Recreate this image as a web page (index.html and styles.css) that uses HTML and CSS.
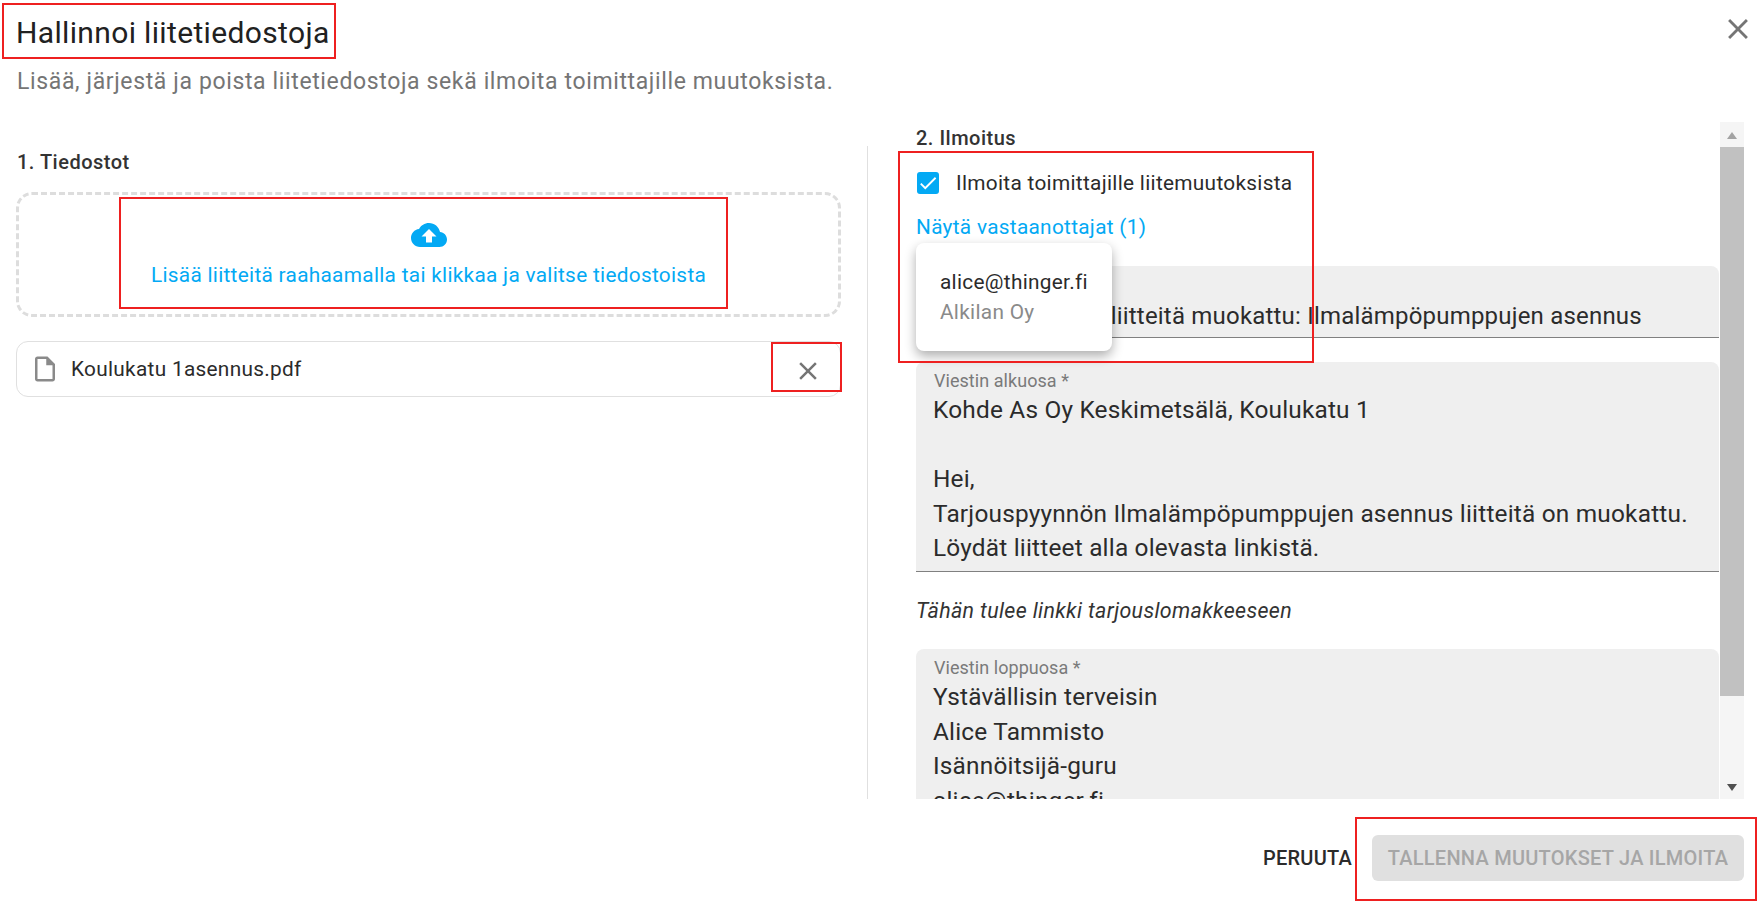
FILE: index.html
```html
<!DOCTYPE html>
<html lang="fi">
<head>
<meta charset="utf-8">
<title>Hallinnoi liitetiedostoja</title>
<link rel="stylesheet" href="styles.css">
</head>
<body>
<div class="dialog">
  <header class="head">
    <h1 class="title">Hallinnoi liitetiedostoja</h1>
    <p class="subtitle">Lisää, järjestä ja poista liitetiedostoja sekä ilmoita toimittajille muutoksista.</p>
    <button class="close" aria-label="Sulje">
      <svg viewBox="0 0 24 24" class="close-icon"><path d="M19 6.41 17.59 5 12 10.59 6.41 5 5 6.41 10.59 12 5 17.59 6.41 19 12 13.41 17.59 19 19 17.59 13.41 12z"/></svg>
    </button>
  </header>
  <main class="body">
    <section class="left">
      <h2 class="section-title">1. Tiedostot</h2>
      <div class="dropzone">
        <svg viewBox="0 0 24 24" class="cloud"><path d="M19.35 10.04C18.67 6.59 15.64 4 12 4 9.11 4 6.6 5.64 5.35 8.04 2.34 8.36 0 10.91 0 14c0 3.31 2.69 6 6 6h13c2.76 0 5-2.24 5-5 0-2.64-2.05-4.78-4.65-4.96zM14 13v4h-4v-4H7l5-5 5 5h-3z"/></svg>
        <span class="drop-text">Lisää liitteitä raahaamalla tai klikkaa ja valitse tiedostoista</span>
      </div>
      <div class="file">
        <svg viewBox="0 0 24 24" class="file-icon"><path d="M14 2H6c-1.1 0-1.99.9-1.99 2L4 20c0 1.1.89 2 1.99 2H18c1.1 0 2-.9 2-2V8l-6-6zM6 20V4h7v5h5v11H6z"/></svg>
        <span class="file-name">Koulukatu 1asennus.pdf</span>
        <svg viewBox="0 0 24 24" class="file-remove"><path d="M19 6.41 17.59 5 12 10.59 6.41 5 5 6.41 10.59 12 5 17.59 6.41 19 12 13.41 17.59 19 19 17.59 13.41 12z"/></svg>
      </div>
    </section>
    <section class="right">
      <div class="scroll-content">
        <h2 class="section-title notify-title">2. Ilmoitus</h2>
        <label class="check-row">
          <span class="checkbox"><svg viewBox="0 0 24 24" class="check-mark"><path d="M9 16.17 4.83 12l-1.42 1.41L9 19 21 7l-1.41-1.41z"/></svg></span>
          <span class="check-label">Ilmoita toimittajille liitemuutoksista</span>
        </label>
        <a class="recipients">Näytä vastaanottajat (1)</a>
        <div class="field field-subject">
          <span class="field-label">Viestin otsikko *</span>
          <div class="field-text">Tarjouspyynnön liitteitä muokattu: Ilmalämpöpumppujen asennus</div>
        </div>
        <div class="field field-start">
          <span class="field-label">Viestin alkuosa *</span>
          <div class="field-text">Kohde As Oy Keskimetsälä, Koulukatu 1<br><br>Hei,<br>Tarjouspyynnön Ilmalämpöpumppujen asennus liitteitä on muokattu.<br>Löydät liitteet alla olevasta linkistä.</div>
        </div>
        <p class="link-note">Tähän tulee linkki tarjouslomakkeeseen</p>
        <div class="field field-end">
          <span class="field-label">Viestin loppuosa *</span>
          <div class="field-text">Ystävällisin terveisin<br>Alice Tammisto<br>Isännöitsijä-guru<br>alice@thinger.fi</div>
        </div>
      </div>
      <div class="scrollbar">
        <span class="arrow-up"></span>
        <span class="thumb"></span>
        <span class="arrow-down"></span>
      </div>
    </section>
  </main>
  <footer class="foot">
    <button class="btn-cancel">PERUUTA</button>
    <button class="btn-save" disabled>TALLENNA MUUTOKSET JA ILMOITA</button>
  </footer>
  <div class="popup">
    <div class="popup-mail">alice@thinger.fi</div>
    <div class="popup-company">Alkilan Oy</div>
  </div>
  <div class="mark mark-title"></div>
  <div class="mark mark-drop"></div>
  <div class="mark mark-remove"></div>
  <div class="mark mark-notify"></div>
  <div class="mark mark-save"></div>
</div>
</body>
</html>
```
FILE: styles.css
```css
* { box-sizing: border-box; }
html, body { margin: 0; height: 100%; }
body { font-family: Roboto, "Liberation Sans", sans-serif; color: #2b2b2b; background: #fff; overflow: hidden; }
.dialog { position: relative; width: 1757px; height: 902px; display: flex; flex-direction: column; }

.head { position: relative; height: 122px; padding: 16px 16px 0 17px; flex: none; }
.title { margin: 0 0 0 -1px; font-size: 30px; line-height: 34px; font-weight: 400; letter-spacing: .35px; color: #212121; }
.subtitle { margin: 19px 0 0; font-size: 23px; line-height: 26px; color: #757575; letter-spacing: .63px; }
.close { position: absolute; top: 12px; right: 2px; width: 34px; height: 34px; padding: 0; border: 0; background: none; }
.close-icon { width: 34px; height: 34px; fill: #757575; display: block; }

.body { flex: 1; display: flex; min-height: 0; }
.left { width: 868px; flex: none; margin-top: 24px; padding: 0 26px 0 16px; border-right: 1px solid #e0e0e0; }
.section-title { margin: 0; font-size: 20px; line-height: 24px; font-weight: 500; letter-spacing: .5px; color: #333; }
.left .section-title { margin: 4px 0 0 1px; }
.dropzone { margin-top: 18px; height: 125px; border: 3px dashed #ddd; border-radius: 16px; display: flex; flex-direction: column; align-items: center; padding-top: 22px; }
.cloud { width: 36px; height: 36px; fill: #03a9f4; display: block; }
.drop-text { margin-top: 10px; font-size: 20.8px; line-height: 24px; color: #03a9f4; letter-spacing: .3px; }
.file { margin-top: 24px; height: 56px; border: 1px solid #e0e0e0; border-radius: 12px; display: flex; align-items: center; padding: 0 17px 0 13px; }
.file-icon { width: 30px; height: 30px; fill: #8a8a8a; flex: none; }
.file-name { margin-left: 11px; font-size: 20.8px; letter-spacing: .3px; flex: 1; }
.file-remove { width: 30px; height: 30px; fill: #757575; flex: none; margin-top: 4px; }

.right { flex: 1; display: flex; min-width: 0; padding-right: 13px; }
.scroll-content { flex: 1; min-width: 0; overflow: hidden; padding-left: 48px; }
.notify-title { line-height: 22px; margin-top: 5px; }
.check-row { display: flex; align-items: center; margin-top: 23px; height: 22px; margin-left: 1px; }
.checkbox { width: 22px; height: 22px; border-radius: 3px; background: #03a9f4; display: block; flex: none; }
.check-mark { width: 22px; height: 22px; fill: #fff; display: block; }
.check-label { margin-left: 17px; font-size: 20.8px; letter-spacing: .3px; }
.recipients { display: block; margin-top: 21px; font-size: 20.8px; line-height: 24px; color: #03a9f4; letter-spacing: .3px; }
.field { position: relative; background: #efefef; border-bottom: 1px solid #808080; border-radius: 8px 8px 0 0; padding: 0 17px; overflow: hidden; }
.field-label { display: block; margin-left: 1px; font-size: 18px; line-height: 20px; color: #7a7a7a; letter-spacing: .05px; }
.field-text { font-size: 24.4px; line-height: 34.5px; letter-spacing: .2px; }
.field-subject { margin-top: 27px; height: 72px; padding-top: 10px; }
.field-subject .field-text { margin-top: 3px; font-size: 24px; }
.field-start { margin-top: 24px; height: 210px; padding-top: 9px; }
.field-start .field-text { margin-top: 2px; }
.field-end { margin-top: 26px; height: 200px; padding-top: 9px; border-bottom: 0; }
.field-end .field-text { margin-top: 2px; }
.link-note { margin: 27px 0 0; font-size: 21.4px; line-height: 24px; font-style: italic; color: #333; letter-spacing: .35px; }

.scrollbar { width: 24px; flex: none; background: #f5f5f5; display: flex; flex-direction: column; align-items: center; margin-left: 1px; }
.arrow-up { margin-top: 10px; width: 0; height: 0; border: 5px solid transparent; border-top: 0; border-bottom: 7px solid #a3a3a3; }
.thumb { align-self: stretch; margin-top: 8px; height: 549px; background: #c1c1c1; }
.arrow-down { margin-top: auto; margin-bottom: 8px; width: 0; height: 0; border: 5px solid transparent; border-bottom: 0; border-top: 7px solid #505050; }

.foot { flex: none; height: 103px; display: flex; align-items: center; justify-content: flex-end; padding: 15px 13px 0 0; }
.btn-cancel { border: 0; background: none; padding: 0; font: 500 20px/24px Roboto, sans-serif; color: #2b2b2b; letter-spacing: .25px; }
.btn-save { margin-left: 20px; width: 372px; height: 46px; border: 0; border-radius: 6px; background: #e0e0e0; color: #a6a6a6; font: 500 20px/24px Roboto, sans-serif; letter-spacing: .25px; padding: 0; }

.popup { position: absolute; left: 916px; top: 243px; width: 196px; height: 108px; background: #fff; border-radius: 8px; box-shadow: 0 5px 12px rgba(0,0,0,.32); padding: 24px 24px 0; }
.popup-mail { font-size: 20.8px; line-height: 30px; letter-spacing: .3px; }
.popup-company { font-size: 20.8px; line-height: 30px; color: #8a8a8a; letter-spacing: .3px; }

.mark { position: absolute; border: 2px solid #ee2020; pointer-events: none; }
.mark-title { left: 2px; top: 3px; width: 334px; height: 56px; }
.mark-drop { left: 119px; top: 197px; width: 609px; height: 112px; }
.mark-remove { left: 771px; top: 342px; width: 71px; height: 50px; }
.mark-notify { left: 898px; top: 151px; width: 416px; height: 212px; }
.mark-save { left: 1355px; top: 817px; width: 402px; height: 84px; }
```
